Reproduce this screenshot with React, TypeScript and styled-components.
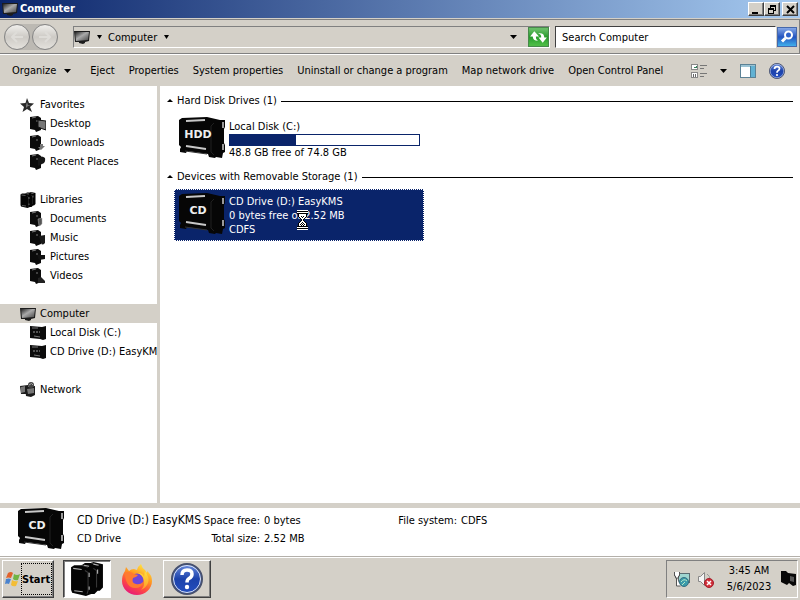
import React from "react";
import styled, { createGlobalStyle, css } from "styled-components";

const face = "#d4d0c8";
const shade = "#808080";
const navy = "#0a246a";

const raised = css`
  border: 1px solid;
  border-color: #fff #404040 #404040 #fff;
  box-shadow: inset -1px -1px 0 ${shade};
`;
const sunken = css`
  border: 1px solid;
  border-color: ${shade} #fff #fff ${shade};
`;

const GlobalStyle = createGlobalStyle`
  * { box-sizing: border-box; }
  body { margin: 0; background: ${face}; }
  body, button, input {
    font-family: "DejaVu Sans Condensed", "Noto Sans", sans-serif;
    font-size: 11px;
    line-height: 15px;
    color: #000;
  }
  button { background: none; border: 0; padding: 0; margin: 0; white-space: nowrap; }
  svg { display: block; flex: none; }
`;

const Desktop = styled.div`
  display: flex;
  flex-direction: column;
  min-height: 100vh;
  background: ${face};
`;

/* ---------- title bar ---------- */
const TitleBar = styled.header`
  display: flex;
  align-items: center;
  gap: 2px;
  height: 18px;
  padding: 0 2px;
  background: linear-gradient(90deg, ${navy}, #a6caf0);
`;
const Title = styled.h1`
  flex: 1;
  margin: 0;
  font-size: 11px;
  line-height: 16px;
  color: #fff;
`;
const WindowButtons = styled.div`
  display: flex;
`;
const WindowButton = styled.button<{ $apart?: boolean }>`
  ${raised}
  width: 16px;
  height: 14px;
  margin-left: ${(p) => (p.$apart ? 2 : 0)}px;
  background: ${face};
  display: grid;
  place-items: center;
`;

/* ---------- navigation bar ---------- */
const NavBar = styled.nav`
  display: flex;
  align-items: center;
  gap: 5px;
  height: 35px;
  margin-top: 1px;
  padding: 1px 2px 0 4px;
  border: 1px solid ${shade};
  border-left: 0;
`;
const History = styled.div`
  display: flex;
  gap: 2px;
  margin-right: 10px;
  border-radius: 14px;
  background: #bcb9b3;
`;
const RoundButton = styled.button`
  width: 26px;
  height: 26px;
  border: 1px solid #858585;
  border-radius: 50%;
  background: linear-gradient(#f0efec, #cdcac5 50%, #e4e2dd);
  display: grid;
  place-items: center;
`;
const AddressBar = styled.div`
  ${sunken}
  flex: 1;
  display: flex;
  align-items: center;
  height: 22px;
`;
const Crumb = styled.button`
  display: flex;
  align-items: center;
  gap: 7px;
  margin-right: 6px;
`;
const Spacer = styled.span`
  flex: 1;
`;
const IconButton = styled.button`
  display: grid;
  place-items: center;
  height: 20px;
`;
const DropButton = styled(IconButton)`
  width: 30px;
`;
const SearchBox = styled.form`
  display: flex;
  align-items: center;
  flex: 0 0 242px;
  gap: 1px;
`;
const SearchInput = styled.input`
  flex: 1;
  min-width: 0;
  height: 22px;
  padding: 0 6px;
  border: 1px solid;
  border-color: #404040 #fff #fff #404040;
  border-radius: 0;
  background: #fff;
  &::placeholder { color: #000; opacity: 1; }
`;

/* ---------- command bar ---------- */
const CommandBar = styled.div`
  display: flex;
  align-items: center;
  gap: 14px;
  height: 32px;
  padding: 0 15px 0 12px;
  border-top: 1px solid #fff;
`;
const Command = styled.button`
  display: flex;
  align-items: center;
  gap: 8px;
`;
const MenuCommand = styled(Command)`
  margin-right: 5px;
`;
const Tools = styled.div`
  display: flex;
  align-items: center;
  gap: 13px;
  margin-left: auto;
`;

/* ---------- panes ---------- */
const Panes = styled.div`
  flex: 1;
  display: flex;
  background: #fff;
`;
const Sidebar = styled.aside`
  flex: 0 0 160px;
  padding-top: 9px;
  border-right: 3px solid ${face};
  overflow: hidden;
`;
const Branch = styled.ul`
  margin: 0 0 19px;
  padding: 0;
  list-style: none;
`;
const TreeLink = styled.a<{ $child?: boolean; $current?: boolean }>`
  display: flex;
  align-items: center;
  gap: 4px;
  height: 19px;
  padding-left: ${(p) => (p.$child ? 30 : 20)}px;
  background: ${(p) => (p.$current ? face : "transparent")};
  color: #000;
  text-decoration: none;
  white-space: nowrap;
`;
const Files = styled.main`
  flex: 1;
  min-width: 0;
  display: flex;
  flex-direction: column;
  gap: 3px;
  padding: 6px 7px;
`;
const GroupHeader = styled.h2`
  display: flex;
  align-items: center;
  gap: 4px;
  height: 18px;
  margin: 0;
  font-size: 11px;
  line-height: 16px;
  font-weight: normal;
  &::after {
    content: "";
    flex: 1;
    border-top: 1px solid #000;
  }
`;
const Drive = styled.button<{ $selected?: boolean }>`
  position: relative;
  display: flex;
  align-items: center;
  gap: 3px;
  width: 250px;
  height: 52px;
  margin-left: 7px;
  padding: 0 3px;
  border: 1px dotted ${(p) => (p.$selected ? "#fff" : "transparent")};
  background: ${(p) => (p.$selected ? navy : "transparent")};
  color: ${(p) => (p.$selected ? "#fff" : "#000")};
  text-align: left;
`;
const DriveText = styled.span`
  flex: 1;
  display: flex;
  flex-direction: column;
  padding-top: 1px;
  line-height: 14px;
`;
const Meter = styled.span`
  height: 12px;
  border: 1px solid ${navy};
  background: #fff;
`;
const MeterFill = styled.span`
  display: block;
  height: 100%;
  background: ${navy};
`;
const BusyCursor = styled.span`
  position: absolute;
  left: 121px;
  top: 20px;
`;

/* ---------- details pane ---------- */
const Details = styled.section`
  display: flex;
  align-items: flex-start;
  gap: 12px;
  height: 54px;
  padding: 0 17px;
  border-top: 5px solid ${face};
  border-bottom: 1px solid #b4b0aa;
  background: #fff;
`;
const Facts = styled.dl`
  display: grid;
  grid-template-columns: 120px 59px 120px 69px auto;
  grid-auto-rows: 18px;
  column-gap: 4px;
  align-items: center;
  margin: 0;
  padding-top: 3px;
  white-space: nowrap;
`;
const Name = styled.dd`
  margin: 0;
  font-size: 12px;
`;
const Kind = styled.dd`
  margin: 0;
`;
const Label = styled.dt`
  display: flex;
  justify-content: flex-end;
`;
const Value = styled.dd`
  margin: 0;
`;

/* ---------- task bar ---------- */
const TaskBar = styled.footer`
  display: flex;
  align-items: stretch;
  gap: 2px;
  height: 43px;
  padding: 2px;
  border-top: 1px solid #fff;
`;
const StartButton = styled.button`
  ${raised}
  display: flex;
  align-items: center;
  width: 52px;
  margin-right: 7px;
  padding: 1px;
  font-size: 11px;
  font-weight: bold;
`;
const StartLabel = styled.span`
  flex: 1;
  display: flex;
  align-items: center;
  height: 32px;
  border: 1px dotted #000;
`;
const TaskButton = styled.button<{ $look?: "pressed" | "raised" }>`
  width: 48px;
  display: grid;
  place-items: center;
  ${(p) => p.$look === "raised" && raised}
  ${(p) =>
    p.$look === "pressed" &&
    css`
      border: 1px solid;
      border-color: #404040 #fff #fff #404040;
      box-shadow: inset 1px 1px 0 ${shade};
      background: #fff;
    `}
`;
const Tray = styled.div`
  ${sunken}
  display: flex;
  align-items: center;
  gap: 7px;
  width: 132px;
  margin-left: auto;
  padding-left: 6px;
`;
const Clock = styled.time`
  flex: 1;
  padding-left: 4px;
  text-align: center;
  line-height: 16px;
`;

/* ---------- drawings ---------- */
const Arrow = ({ size = 7 }: { size?: number }) => (
  <svg width={size} height="4" viewBox="0 0 8 4" preserveAspectRatio="none"><path d="M0 0h8L4 4z" /></svg>
);
const UpArrow = () => (
  <svg width="6" height="10" viewBox="0 0 6 10"><path d="M0 6h6L3 3z" /></svg>
);
const Monitor = () => (
  <svg width="16" height="16" viewBox="0 0 16 16">
    <defs>
      <linearGradient id="screen" x1="0" y1="0" x2="1" y2="1">
        <stop offset="0" stopColor="#222" /><stop offset=".45" stopColor="#aaa" /><stop offset="1" stopColor="#444" />
      </linearGradient>
    </defs>
    <path d="M0 2L16 2l-1 10-4 1v1l-2 1-4-1v-1H1z" fill="#1c1c1c" />
    <path d="M1 3l14 0-1 8-12 1z" fill="url(#screen)" />
  </svg>
);
const Star = () => (
  <svg width="16" height="16" viewBox="0 0 16 16">
    <path d="M7 1l2 5 5 .5-4 3.500 2 5-5-3-4.500 3 1.500-5L0 6.500 5.500 6z" fill="#2a2a2a" />
    <path d="M7 5l1 3 3 0-3 1-2 2 0-3z" fill="#777" />
  </svg>
);
const marks: Record<string, React.ReactNode> = {
  desktop: <path d="M8 4l8 1v9l-3-1-5-2z" fill="#777" stroke="#111" />,
  downloads: <path d="M10 9h3v2h2l-4 4-3-3h2z" fill="#777" />,
  recent: <path d="M8 4q4-3 7 0 1 5-3 6l-4 2z" fill="#161616" />,
  documents: <path d="M8 8l4-1v6l-3 2z" fill="#555" stroke="#aaa" strokeWidth=".5" />,
  music: <path d="M9 6l6-1v8q-3 3-4 0z" fill="#1a1a1a" />,
  pictures: <path d="M7 6l8 0v4l-6 1z" fill="#111" />,
  videos: <path d="M8 10l3-1 4 4v2l-7 0z" fill="#222" />,
};
const Folder = ({ mark }: { mark: string }) => (
  <svg width="16" height="16" viewBox="0 0 16 16">
    <path d="M0 1l8-1 3 2v12l-5 2-1-2-5-1z" fill="#0b0b0b" />
    <path d="M2 2l4-1M7 4v2" stroke="#777" fill="none" />
    {marks[mark]}
  </svg>
);
const Cabinets = ({ size = 16 }: { size?: number }) => (
  <svg width={size} height={size} viewBox="0 0 32 32">
    <path d="M1 5l3-2 7 0 3-2 6 0 2-1 9 2v22l-3 3-2 0-3 3-3 0-5 2-13-3-1-3z" fill="#040404" />
    <path d="M14 8l3 2v17l-1 3M22 6l3 2v16M11 3l6 2M20 1l6 2" stroke="#383838" fill="none" />
    <path d="M3 6l8 1M13 3l5 1M22 2l5 1M4 27l8 1" stroke="#b0b0b0" fill="none" />
    <path d="M18 10v4M26 7v4M18 23v3" stroke="#bbb" fill="none" />
  </svg>
);
const MiniDrive = () => (
  <svg width="16" height="16" viewBox="0 0 16 16">
    <path d="M0 1l12 1 4-1v13l-3 1-3-1-10-1z" fill="#0b0b0b" />
    <path d="M2 3h6M4 11l6 1" stroke="#777" fill="none" />
    <path d="M3 7l7 0" stroke="#999" strokeDasharray="2 1" fill="none" />
  </svg>
);
const Network = () => (
  <svg width="16" height="16" viewBox="0 0 16 16">
    <path d="M0 4l8-1v9l-7 0zM5 5l10-1v9l-4 2-5-1z" fill="#1c1c1c" />
    <path d="M1 5l4-1v6l-4 1zM7 7l7-1v5l-6 1z" fill="#777" />
    <circle cx="11" cy="3" r="3" fill="#444" /><path d="M9 3q3-3 4 0" stroke="#aaa" fill="none" />
  </svg>
);
const DriveArt = ({ label }: { label: string }) => (
  <svg width="48" height="44" viewBox="0 0 48 44">
    <path d="M1 3l3-2 25-1 13 3 5 0 0 7-1 2v14l1 2v7l-2 1-1 5-6-1-1 1-6-1-1-3-21-3-1 2-6-1v-3l1-2-2-2V5z" fill="#060606" />
    <path d="M8 4l19-1M8 29l20 3" stroke="#c8c8c8" strokeWidth="2" fill="none" />
    <path d="M7 34l22 3" stroke="#333" fill="none" />
    <path d="M36 6l-3 3v26l3 3" stroke="#202020" fill="none" />
    <path d="M45 5v6M45 27v6" stroke="#9a9a9a" strokeWidth="2" fill="none" />
    <text x="20" y="21" textAnchor="middle" fill="#eee" fontFamily="DejaVu Sans" fontWeight="bold" fontSize="11">{label}</text>
  </svg>
);
const Refresh = () => (
  <svg width="21" height="20" viewBox="0 0 20 19">
    <defs><linearGradient id="green" x2="0" y2="1"><stop stopColor="#74c673" /><stop offset=".5" stopColor="#279b2c" /><stop offset="1" stopColor="#54c34a" /></linearGradient></defs>
    <rect x=".5" y=".5" width="19" height="18" fill="url(#green)" stroke="#46894a" />
    <path d="M6 4L2 9h2.500q0 4 5 4Q7 11 7.500 9h3zM14 15l4-5h-2.500q0-5-6-4 3.500 1 3 4H10z" fill="#fff" />
  </svg>
);
const Magnifier = () => (
  <svg width="20" height="20" viewBox="0 0 20 20">
    <defs><linearGradient id="blue" x2="0" y2="1"><stop stopColor="#8aace8" /><stop offset=".5" stopColor="#2454c0" /><stop offset="1" stopColor="#42b4ee" /></linearGradient></defs>
    <rect x=".5" y=".5" width="19" height="19" fill="url(#blue)" stroke="#4668aa" />
    <circle cx="11.500" cy="8" r="3.500" fill="#2f62ca" stroke="#fff" strokeWidth="2" />
    <path d="M8.500 11L5 14.500" stroke="#fff" strokeWidth="3" />
  </svg>
);
const ViewIcon = () => (
  <svg width="17" height="16" viewBox="0 0 17 16" shapeRendering="crispEdges">
    <path d="M1.500 1.500h6v5h-6zM1.500 9.500h6v5h-6z" fill="#fff" stroke="#888" />
    <path d="M3 5h4V3z" fill="#35805c" /><path d="M3.500 11v3M5.500 11v3" stroke="#666" />
    <path d="M10 2.500h7M10 5.500h4M10 10.500h7M10 13.500h4" stroke="#777" />
  </svg>
);
const PaneIcon = () => (
  <svg width="16" height="14" viewBox="0 0 16 14">
    <rect x=".5" y=".5" width="15" height="13" fill="#fff" stroke="#5c8295" />
    <path d="M1 2h14" stroke="#9bc3d4" strokeWidth="2" />
    <path d="M10 2h5v11h-5z" fill="#62b2d3" /><path d="M10.500 2v11" stroke="#487e99" />
  </svg>
);
const Help = ({ size = 16 }: { size?: number }) => (
  <svg width={size} height={size} viewBox="0 0 32 32">
    <defs><linearGradient id="help" x2="0" y2="1"><stop stopColor="#6b8dde" /><stop offset=".5" stopColor="#1c42ab" /><stop offset="1" stopColor="#244fc0" /></linearGradient></defs>
    <circle cx="16" cy="16" r="15" fill="url(#help)" stroke="#46506e" strokeWidth="2" />
    <circle cx="16" cy="16" r="13.500" fill="none" stroke="#dce4f5" />
    <path d="M11 12q0-5 5-5t5 4q0 3-3 4.500-2 1-2 4" fill="none" stroke="#fff" strokeWidth="3.500" />
    <circle cx="16" cy="24" r="2.200" fill="#fff" />
  </svg>
);
const Hourglass = () => (
  <svg width="13" height="20" viewBox="0 0 13 20" shapeRendering="crispEdges">
    <path d="M1 0h11v4h-1v3h-1v1h-1v1h-1v2h1v1h1v1h1v3h1v4H1v-4h1v-3h1v-1h1v-1h1V9H4V8H3V7H2V4H1z" fill="#fff" />
    <path d="M1 1h11v1H1zM1 3h11v1H1zM1 16h11v1H1zM1 18h11v1H1zM2 4h1v3H2zM10 4h1v3h-1zM3 7h1v1H3zM9 7h1v1H9zM4 8h1v1H4zM8 8h1v1H8zM5 9h1v2H5zM7 9h1v2H7zM4 11h1v1H4zM8 11h1v1H8zM3 12h1v1H3zM9 12h1v1H9zM2 13h1v3H2zM10 13h1v3h-1z" />
    <path d="M5 6h1v1H5zM7 6h1v1H7zM6 7h1v1H6zM6 12h1v1H6zM5 13h1v1H5zM7 13h1v1H7zM4 14h1v1H4zM6 14h1v1H6zM8 14h1v1H8zM5 15h1v1H5zM7 15h1v1H7z" />
  </svg>
);
const Flag = () => (
  <svg width="17" height="16" viewBox="0 0 17 16">
    <path d="M4 2q3-2 5 0L7 7Q4 6 2 7z" fill="#e2622c" />
    <path d="M10 3q3 2 6 0l-2 6q-3 1-5-1z" fill="#71b443" />
    <path d="M2 8q3-1 5 0l-2 5q-2-1-4 0z" fill="#4a83ce" />
    <path d="M8 9q3 2 6 1l-2 5q-3 1-5-1z" fill="#f3bd35" />
  </svg>
);
const Firefox = () => (
  <svg width="32" height="32" viewBox="0 0 32 32">
    <defs>
      <linearGradient id="fire" x1=".8" y1="0" x2=".3" y2="1"><stop stopColor="#fff04a" /><stop offset=".4" stopColor="#ff9a20" /><stop offset=".7" stopColor="#ff4a42" /><stop offset="1" stopColor="#e5187c" /></linearGradient>
      <linearGradient id="tail" x2="0" y2="1"><stop stopColor="#ffe23d" /><stop offset="1" stopColor="#ff9a29" /></linearGradient>
    </defs>
    <path d="M4 8l1-4 3 4q2-2 5-2l3 1q1-4 4-6 1 4 4 6l2 3v-2q5 4 5 10c0 8-7 14-15 14S1 26 1 18q0-6 3-10z" fill="url(#fire)" />
    <circle cx="16" cy="17" r="6.500" fill="#7047d8" />
    <path d="M4 10q5-3 9 1l4 1q-1 2-5 3-2 5 3 6 4 1 7-2-1 6-8 6C8 25 4 19 4 10z" fill="#ff7a30" />
    <path d="M17 10q5 0 6 4l1-6q5 7 3 12-2 5-7 7 4-4 3-9-1-6-6-8z" fill="url(#tail)" />
  </svg>
);
const NetworkTray = () => (
  <svg width="17" height="17" viewBox="0 0 17 17">
    <rect x="5.500" y="2.500" width="11" height="9" fill="#9fd5d0" stroke="#5a6b72" />
    <path d="M1.500 1v4h1v2h3V5h1V1M3.500 7v8h4" fill="#fff" stroke="#555" />
    <circle cx="11" cy="11" r="4.500" fill="#3b9bab" stroke="#397080" /><path d="M8 11q3-4 6-1M9 14l3-3" stroke="#b8ebc7" fill="none" />
  </svg>
);
const Muted = () => (
  <svg width="17" height="17" viewBox="0 0 17 17">
    <path d="M1.500 5.500h2l4-4v13l-4-4h-2z" fill="#f5f5f5" stroke="#888" /><path d="M10 3q3 2 3 5" stroke="#999" fill="none" />
    <circle cx="12" cy="12" r="4.500" fill="#d22f39" stroke="#a31e2b" /><path d="M10 10l4 4M14 10l-4 4" stroke="#fff" strokeWidth="1.500" />
  </svg>
);
const ActionCenter = () => (
  <svg width="17" height="18" viewBox="0 0 17 18">
    <path d="M1 1l5 0 2 2 8 1v11l-3 1-4-3-2 2-6-3z" fill="#080808" /><path d="M10 6l4 1v5l-4-1z" fill="#555" />
  </svg>
);

/* ---------- content ---------- */
const commands = ["Eject", "Properties", "System properties", "Uninstall or change a program", "Map network drive", "Open Control Panel"];

type Node = { name: string; icon: React.ReactNode; current?: boolean };
const tree: Node[][] = [
  [
    { name: "Favorites", icon: <Star /> },
    { name: "Desktop", icon: <Folder mark="desktop" /> },
    { name: "Downloads", icon: <Folder mark="downloads" /> },
    { name: "Recent Places", icon: <Folder mark="recent" /> },
  ],
  [
    { name: "Libraries", icon: <Cabinets /> },
    { name: "Documents", icon: <Folder mark="documents" /> },
    { name: "Music", icon: <Folder mark="music" /> },
    { name: "Pictures", icon: <Folder mark="pictures" /> },
    { name: "Videos", icon: <Folder mark="videos" /> },
  ],
  [
    { name: "Computer", icon: <Monitor />, current: true },
    { name: "Local Disk (C:)", icon: <MiniDrive /> },
    { name: "CD Drive (D:) EasyKMS", icon: <MiniDrive /> },
  ],
  [{ name: "Network", icon: <Network /> }],
];
const disk = { free: 48.8, total: 74.8 };

export default function App() {
  const used = ((disk.total - disk.free) / disk.total) * 100;
  return (
    <Desktop>
      <GlobalStyle />
      <TitleBar>
        <Monitor />
        <Title>Computer</Title>
        <WindowButtons>
          <WindowButton aria-label="Minimize"><svg width="10" height="9"><path d="M1 7h6v2H1z" /></svg></WindowButton>
          <WindowButton aria-label="Restore"><svg width="10" height="10" shapeRendering="crispEdges"><path d="M3 1h6v2H3zM1 4h6v2H1zM3 3h1v1H3zM8 3h1v4H8zM7 6h1v1H7zM1 6h1v3H1zM6 6h1v3H6zM1 9h6v1H1z" /></svg></WindowButton>
          <WindowButton aria-label="Close" $apart><svg width="9" height="9"><path d="M1 1l7 7M8 1L1 8" stroke="#000" strokeWidth="2" /></svg></WindowButton>
        </WindowButtons>
      </TitleBar>

      <NavBar>
        <History>
          <RoundButton aria-label="Back"><svg width="14" height="12"><path d="M7 1L2 6l5 5M2 6h11" fill="none" stroke="#dedcd8" strokeWidth="2" /></svg></RoundButton>
          <RoundButton aria-label="Forward"><svg width="14" height="12"><path d="M7 1l5 5-5 5M12 6H1" fill="none" stroke="#dedcd8" strokeWidth="2" /></svg></RoundButton>
        </History>
        <AddressBar>
          <Crumb aria-label="Locations"><Monitor /><Arrow size={5} /></Crumb>
          <Crumb>Computer<Arrow size={5} /></Crumb>
          <Spacer />
          <DropButton aria-label="Previous locations"><Arrow /></DropButton>
          <IconButton aria-label="Refresh"><Refresh /></IconButton>
        </AddressBar>
        <SearchBox role="search">
          <SearchInput type="search" aria-label="Search Computer" placeholder="Search Computer" />
          <IconButton type="button" aria-label="Search"><Magnifier /></IconButton>
        </SearchBox>
      </NavBar>

      <CommandBar>
        <MenuCommand>Organize<Arrow /></MenuCommand>
        {commands.map((c) => <Command key={c}>{c}</Command>)}
        <Tools>
          <Command aria-label="Change view"><ViewIcon /></Command>
          <Command aria-label="View options"><Arrow /></Command>
          <Command aria-label="Preview pane"><PaneIcon /></Command>
          <Command aria-label="Help"><Help /></Command>
        </Tools>
      </CommandBar>

      <Panes>
        <Sidebar>
          {tree.map((branch) => (
            <Branch key={branch[0].name}>
              {branch.map((n, i) => (
                <li key={n.name}>
                  <TreeLink href="#" $child={i > 0} $current={n.current}>{n.icon}{n.name}</TreeLink>
                </li>
              ))}
            </Branch>
          ))}
        </Sidebar>
        <Files>
          <GroupHeader><UpArrow />Hard Disk Drives (1)</GroupHeader>
          <Drive>
            <DriveArt label="HDD" />
            <DriveText>
              <span>Local Disk (C:)</span>
              <Meter role="meter" aria-label="Space used" aria-valuenow={Math.round(used)}>
                <MeterFill style={{ width: `${used}%` }} />
              </Meter>
              <span>{disk.free} GB free of {disk.total} GB</span>
            </DriveText>
          </Drive>
          <GroupHeader><UpArrow />Devices with Removable Storage (1)</GroupHeader>
          <Drive $selected>
            <DriveArt label="CD" />
            <DriveText>
              <span>CD Drive (D:) EasyKMS</span>
              <span>0 bytes free of 2.52 MB</span>
              <span>CDFS</span>
            </DriveText>
            <BusyCursor><Hourglass /></BusyCursor>
          </Drive>
        </Files>
      </Panes>

      <Details>
        <DriveArt label="CD" />
        <Facts>
          <Name>CD Drive (D:) EasyKMS</Name>
          <Label>Space free:</Label><Value>0 bytes</Value>
          <Label>File system:</Label><Value>CDFS</Value>
          <Kind>CD Drive</Kind>
          <Label>Total size:</Label><Value>2.52 MB</Value>
        </Facts>
      </Details>

      <TaskBar>
        <StartButton><Flag /><StartLabel>Start</StartLabel></StartButton>
        <TaskButton aria-label="File Explorer" $look="pressed"><Cabinets size={34} /></TaskButton>
        <TaskButton aria-label="Firefox"><Firefox /></TaskButton>
        <TaskButton aria-label="Help and Support" $look="raised"><Help size={32} /></TaskButton>
        <Tray>
          <NetworkTray />
          <Muted />
          <Clock>3:45 AM<br />5/6/2023</Clock>
          <ActionCenter />
        </Tray>
      </TaskBar>
    </Desktop>
  );
}
